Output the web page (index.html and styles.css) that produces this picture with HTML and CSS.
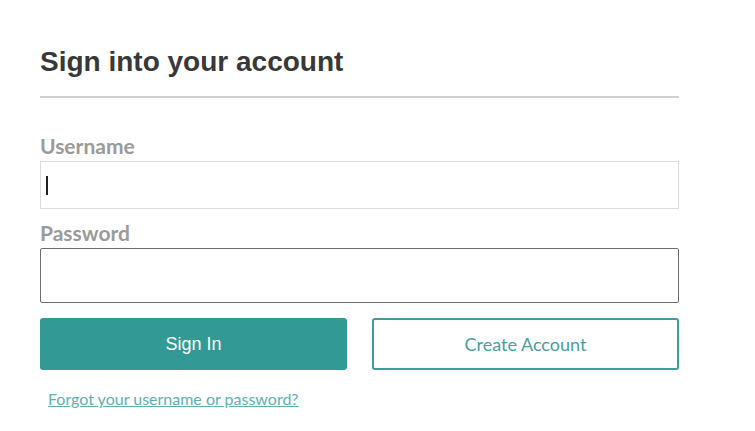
FILE: index.html
```html
<!DOCTYPE html>
<html>
<head>
<meta name="viewport" content="width=device-width, minimum-scale=1.0">
<link rel="stylesheet" href="styles.css">
</head>
<body>
<div class="signin">
  <h1 class="title">Sign into your account</h1>
  <form class="form">
    <label class="label" for="username">Username</label>
    <div class="input input-user" id="username"><span class="caret"></span></div>
    <label class="label" for="password">Password</label>
    <div class="input input-pass" id="password"></div>
    <div class="actions">
      <button type="button" class="btn btn-primary">Sign In</button>
      <button type="button" class="btn btn-outline">Create Account</button>
    </div>
    <a class="forgot" href="#">Forgot your username or password?</a>
  </form>
</div>
</body>
</html>
```

FILE: styles.css
```css
body {
  margin: 0;
  background: #fff;
  font-family: Lato, "Open Sans", sans-serif;
}

.signin {
  width: 639px;
  padding: 46px 0 0 40px;
}

.title {
  margin: 0;
  padding-bottom: 18px;
  border-bottom: 2px solid #d0d0d0;
  font-family: "Liberation Sans", Arial, sans-serif;
  font-size: 28px;
  font-weight: bold;
  color: #383838;
  line-height: 32px;
}

.form {
  display: flex;
  flex-direction: column;
  padding-top: 36px;
}

.label {
  font-size: 21px;
  font-weight: bold;
  color: #9a9a9a;
  line-height: 24px;
  margin-bottom: 3px;
}

.input {
  box-sizing: border-box;
  border: 1px solid #dcdcdc;
  background: #fff;
  margin-bottom: 12px;
}

.input-user {
  height: 48px;
  padding: 14px 0 0 5px;
}

.input-pass {
  height: 55px;
  border-color: #6e6e6e;
  border-radius: 2px;
  margin-bottom: 15px;
}

.caret {
  display: block;
  width: 2px;
  height: 19px;
  background: #222;
}

.actions {
  display: flex;
  gap: 25px;
}

.btn {
  flex: none;
  box-sizing: border-box;
  width: 307px;
  height: 52px;
  border-radius: 3px;
  font-size: 18px;
  cursor: pointer;
}

.btn-primary {
  background: #339994;
  border: none;
  color: #fff;
  font-family: "Liberation Sans", Arial, sans-serif;
}

.btn-outline {
  background: #fff;
  border: 2px solid #3f9c99;
  color: #46a09d;
  font-family: Lato, "Open Sans", sans-serif;
}

.forgot {
  align-self: flex-start;
  margin: 19px 0 0 8px;
  font-size: 16px;
  color: #5fb0ad;
  text-decoration: underline;
  line-height: 20px;
}
```
